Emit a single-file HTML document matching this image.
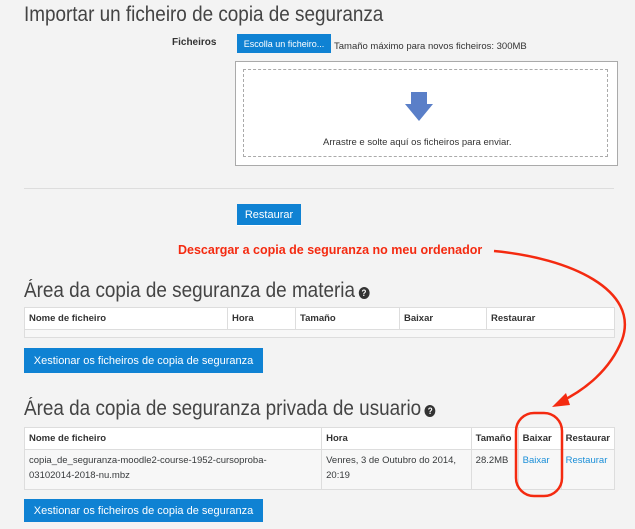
<!DOCTYPE html>
<html><head><meta charset="utf-8"><style>
body{margin:0;width:635px;height:529px;background:#f3f3f3;font-family:"Liberation Sans",sans-serif;position:relative;overflow:hidden;color:#373a3c}
.a{position:absolute}
h{position:absolute;font-size:21px;font-weight:normal;color:#444;white-space:nowrap;transform:scaleX(0.9);transform-origin:0 0}
.btn{position:absolute;background:#0f82d3;color:#fff;font-size:11px;display:flex;align-items:center;justify-content:center}
table{position:absolute;border-collapse:collapse;background:#fff;font-size:9.5px}
td,th{border:1px solid #ddd;text-align:left;padding:0 4px;vertical-align:top}
th{font-weight:bold;color:#333;height:21px;vertical-align:middle}
.q{display:inline-block;width:12px;height:12px;border-radius:50%;background:#333;color:#fff;font-size:9px;font-weight:bold;text-align:center;line-height:12px;vertical-align:1px;margin-left:4px}
</style></head><body>
<h style="left:24px;top:3px">Importar un ficheiro de copia de seguranza</h>
<div class="a" style="left:172px;top:37px;font-size:10px;font-weight:bold;color:#333">Ficheiros</div>
<div class="btn" style="left:237px;top:34px;width:94px;height:19px;font-size:9px">Escolla un ficheiro...</div>
<div class="a" style="left:334px;top:41px;font-size:9.5px;color:#333">Tamaño máximo para novos ficheiros: 300MB</div>
<div class="a" style="left:235px;top:61px;width:381px;height:103px;background:#fff;border:1px solid #aaa"></div>
<div class="a" style="left:243px;top:69px;width:363px;height:86px;border:1px dashed #aaa"></div>
<svg class="a" style="left:403px;top:91px" width="32" height="32"><polygon points="8,1 24,1 24,13 30,13 16,30 2,13 8,13" fill="#5a7fc8"/></svg>
<div class="a" style="left:323px;top:137px;font-size:9.5px;color:#333">Arrastre e solte aquí os ficheiros para enviar.</div>
<div class="a" style="left:24px;top:188px;width:590px;height:1px;background:#ddd"></div>
<div class="btn" style="left:237px;top:204px;width:64px;height:22px;border-bottom:1px solid #fff;box-sizing:border-box">Restaurar</div>
<div class="a" style="left:178px;top:243px;font-size:12.5px;font-weight:bold;color:#f42a10;white-space:nowrap">Descargar a copia de seguranza no meu ordenador</div>
<h style="left:24px;top:279px">Área da copia de seguranza de materia<span class="q">?</span></h>
<table style="left:24px;top:307px;width:591px">
<tr><th style="width:194px">Nome de ficheiro</th><th style="width:59px">Hora</th><th style="width:95px">Tamaño</th><th style="width:78px">Baixar</th><th>Restaurar</th></tr>
<tr><td colspan="5" style="height:7px;background:#f7f7f7"></td></tr></table>
<div class="btn" style="left:24px;top:348px;width:239px;height:25px">Xestionar os ficheiros de copia de seguranza</div>
<h style="left:24px;top:397px">Área da copia de seguranza privada de usuario<span class="q">?</span></h>
<table style="left:24px;top:427px;width:591px">
<tr><th style="width:289px">Nome de ficheiro</th><th style="width:141px">Hora</th><th style="width:38px">Tamaño</th><th style="width:34px">Baixar</th><th>Restaurar</th></tr>
<tr style="background:#f7f7f7;line-height:15px"><td style="height:36px;padding-top:3px">copia_de_seguranza-moodle2-course-1952-cursoproba-<br>03102014-2018-nu.mbz</td><td style="padding-top:3px">Venres, 3 de Outubro do 2014,<br>20:19</td><td style="padding-top:3px">28.2MB</td><td style="padding-top:3px;color:#1b8fd8">Baixar</td><td style="padding-top:3px;color:#1b8fd8">Restaurar</td></tr></table>
<div class="btn" style="left:24px;top:499px;width:239px;height:23px">Xestionar os ficheiros de copia de seguranza</div>
<svg class="a" style="left:0;top:0" width="635" height="529">
<path d="M494,251 C570,258 640,290 622,340 C610,370 585,390 560,402" fill="none" stroke="#f42a10" stroke-width="2.5"/>
<polygon points="552,407 566,393 570,405" fill="#f42a10"/>
<rect x="516" y="413" width="46" height="83" rx="18" ry="18" fill="none" stroke="#f42a10" stroke-width="2.5"/>
</svg>
</body></html>
